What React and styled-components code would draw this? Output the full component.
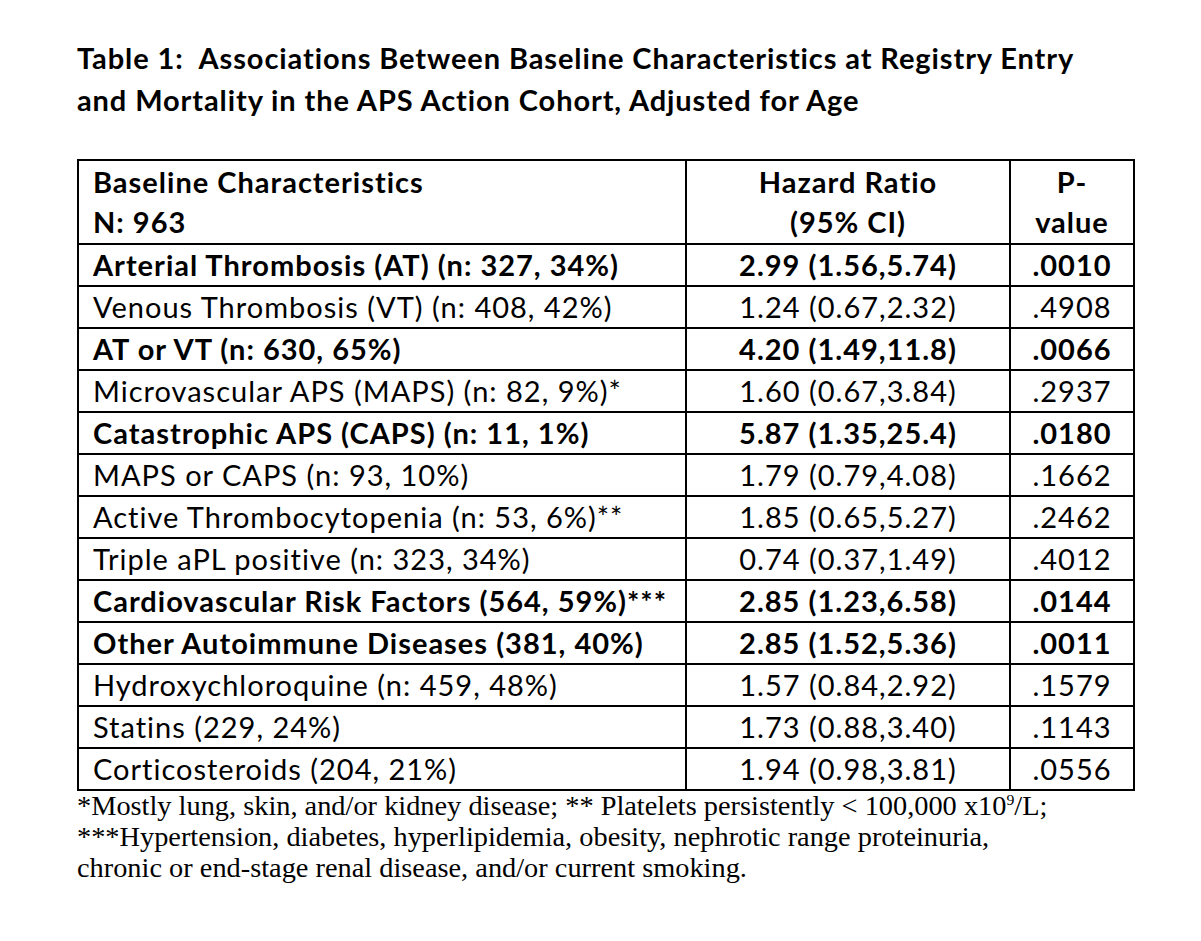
import styled, { createGlobalStyle } from "styled-components";

const GlobalStyle = createGlobalStyle`
  html, body {
    margin: 0;
    padding: 0;
    background: #fff;
  }
  body {
    font-family: Lato, "Open Sans", sans-serif;
    color: #000;
  }
`;

const rows = [
  { label: "Arterial Thrombosis (AT) (n: 327, 34%)", hr: "2.99 (1.56,5.74)", p: ".0010", bold: true },
  { label: "Venous Thrombosis (VT) (n: 408, 42%)", hr: "1.24 (0.67,2.32)", p: ".4908" },
  { label: "AT or VT (n: 630, 65%)", hr: "4.20 (1.49,11.8)", p: ".0066", bold: true },
  { label: "Microvascular APS (MAPS) (n: 82, 9%)*", hr: "1.60 (0.67,3.84)", p: ".2937" },
  { label: "Catastrophic APS (CAPS) (n: 11, 1%)", hr: "5.87 (1.35,25.4)", p: ".0180", bold: true },
  { label: "MAPS or CAPS (n: 93, 10%)", hr: "1.79 (0.79,4.08)", p: ".1662" },
  { label: "Active Thrombocytopenia (n: 53, 6%)**", hr: "1.85 (0.65,5.27)", p: ".2462" },
  { label: "Triple aPL positive (n: 323, 34%)", hr: "0.74 (0.37,1.49)", p: ".4012" },
  { label: "Cardiovascular Risk Factors (564, 59%)***", hr: "2.85 (1.23,6.58)", p: ".0144", bold: true },
  { label: "Other Autoimmune Diseases (381, 40%)", hr: "2.85 (1.52,5.36)", p: ".0011", bold: true },
  { label: "Hydroxychloroquine (n: 459, 48%)", hr: "1.57 (0.84,2.92)", p: ".1579" },
  { label: "Statins (229, 24%)", hr: "1.73 (0.88,3.40)", p: ".1143" },
  { label: "Corticosteroids (204, 21%)", hr: "1.94 (0.98,3.81)", p: ".0556" },
];

export default function App() {
  return (
    <Page>
      <GlobalStyle />
      <Title>
        Table 1:&nbsp; Associations Between Baseline Characteristics at Registry Entry
        <br />
        and Mortality in the APS Action Cohort, Adjusted for Age
      </Title>
      <Table>
        <colgroup>
          <col style={{ width: 608 }} />
          <col style={{ width: 324 }} />
          <col style={{ width: 124 }} />
        </colgroup>
        <thead>
          <HeadRow>
            <Cell $bold>
              Baseline Characteristics
              <br />
              N: 963
            </Cell>
            <Cell $bold $center>
              Hazard Ratio
              <br />
              (95% CI)
            </Cell>
            <Cell $bold $center>
              P-
              <br />
              value
            </Cell>
          </HeadRow>
        </thead>
        <tbody>
          {rows.map((r) => (
            <Row key={r.label}>
              <Cell $bold={r.bold}>{r.label}</Cell>
              <Cell $bold={r.bold} $center>{r.hr}</Cell>
              <Cell $bold={r.bold} $center>{r.p}</Cell>
            </Row>
          ))}
        </tbody>
      </Table>
      <Footnote>
        <NoteLine>
          *Mostly lung, skin, and/or kidney disease; ** Platelets persistently &lt; 100,000 x10<sup>9</sup>/L;
        </NoteLine>
        <NoteLine>
          ***Hypertension, diabetes, hyperlipidemia, obesity, nephrotic range proteinuria,
        </NoteLine>
        <NoteLine>chronic or end-stage renal disease, and/or current smoking.</NoteLine>
      </Footnote>
    </Page>
  );
}

const Page = styled.div`
  padding: 37px 0 40px 77px;
  width: 1056px;
`;

const Title = styled.h1`
  margin: 0 0 38px 0;
  font-size: 29px;
  letter-spacing: 0.9px;
  line-height: 42px;
  font-weight: 700;
  white-space: nowrap;
`;

const Table = styled.table`
  border-collapse: collapse;
  table-layout: fixed;
  width: 1056px;
  font-size: 29px;
  letter-spacing: 1px;
`;

const HeadRow = styled.tr`
  height: 84px;
  line-height: 40px;
`;

const Row = styled.tr`
  height: 42px;
  line-height: 38px;
`;

const Cell = styled.td`
  border: 2px solid #000;
  padding: 0 14px;
  font-weight: ${(p) => (p.$bold ? 700 : 400)};
  text-align: ${(p) => (p.$center ? "center" : "left")};
  white-space: nowrap;
  line-height: inherit;
  vertical-align: middle;
`;

const Footnote = styled.div`
  font-family: "Liberation Serif", "Times New Roman", serif;
  font-size: 27px;
  line-height: 31px;
  margin-top: 0;
`;

const NoteLine = styled.div`
  white-space: nowrap;
  transform: scaleX(1.05);
  transform-origin: left center;

  sup {
    font-size: 15px;
    line-height: 0;
  }
`;
